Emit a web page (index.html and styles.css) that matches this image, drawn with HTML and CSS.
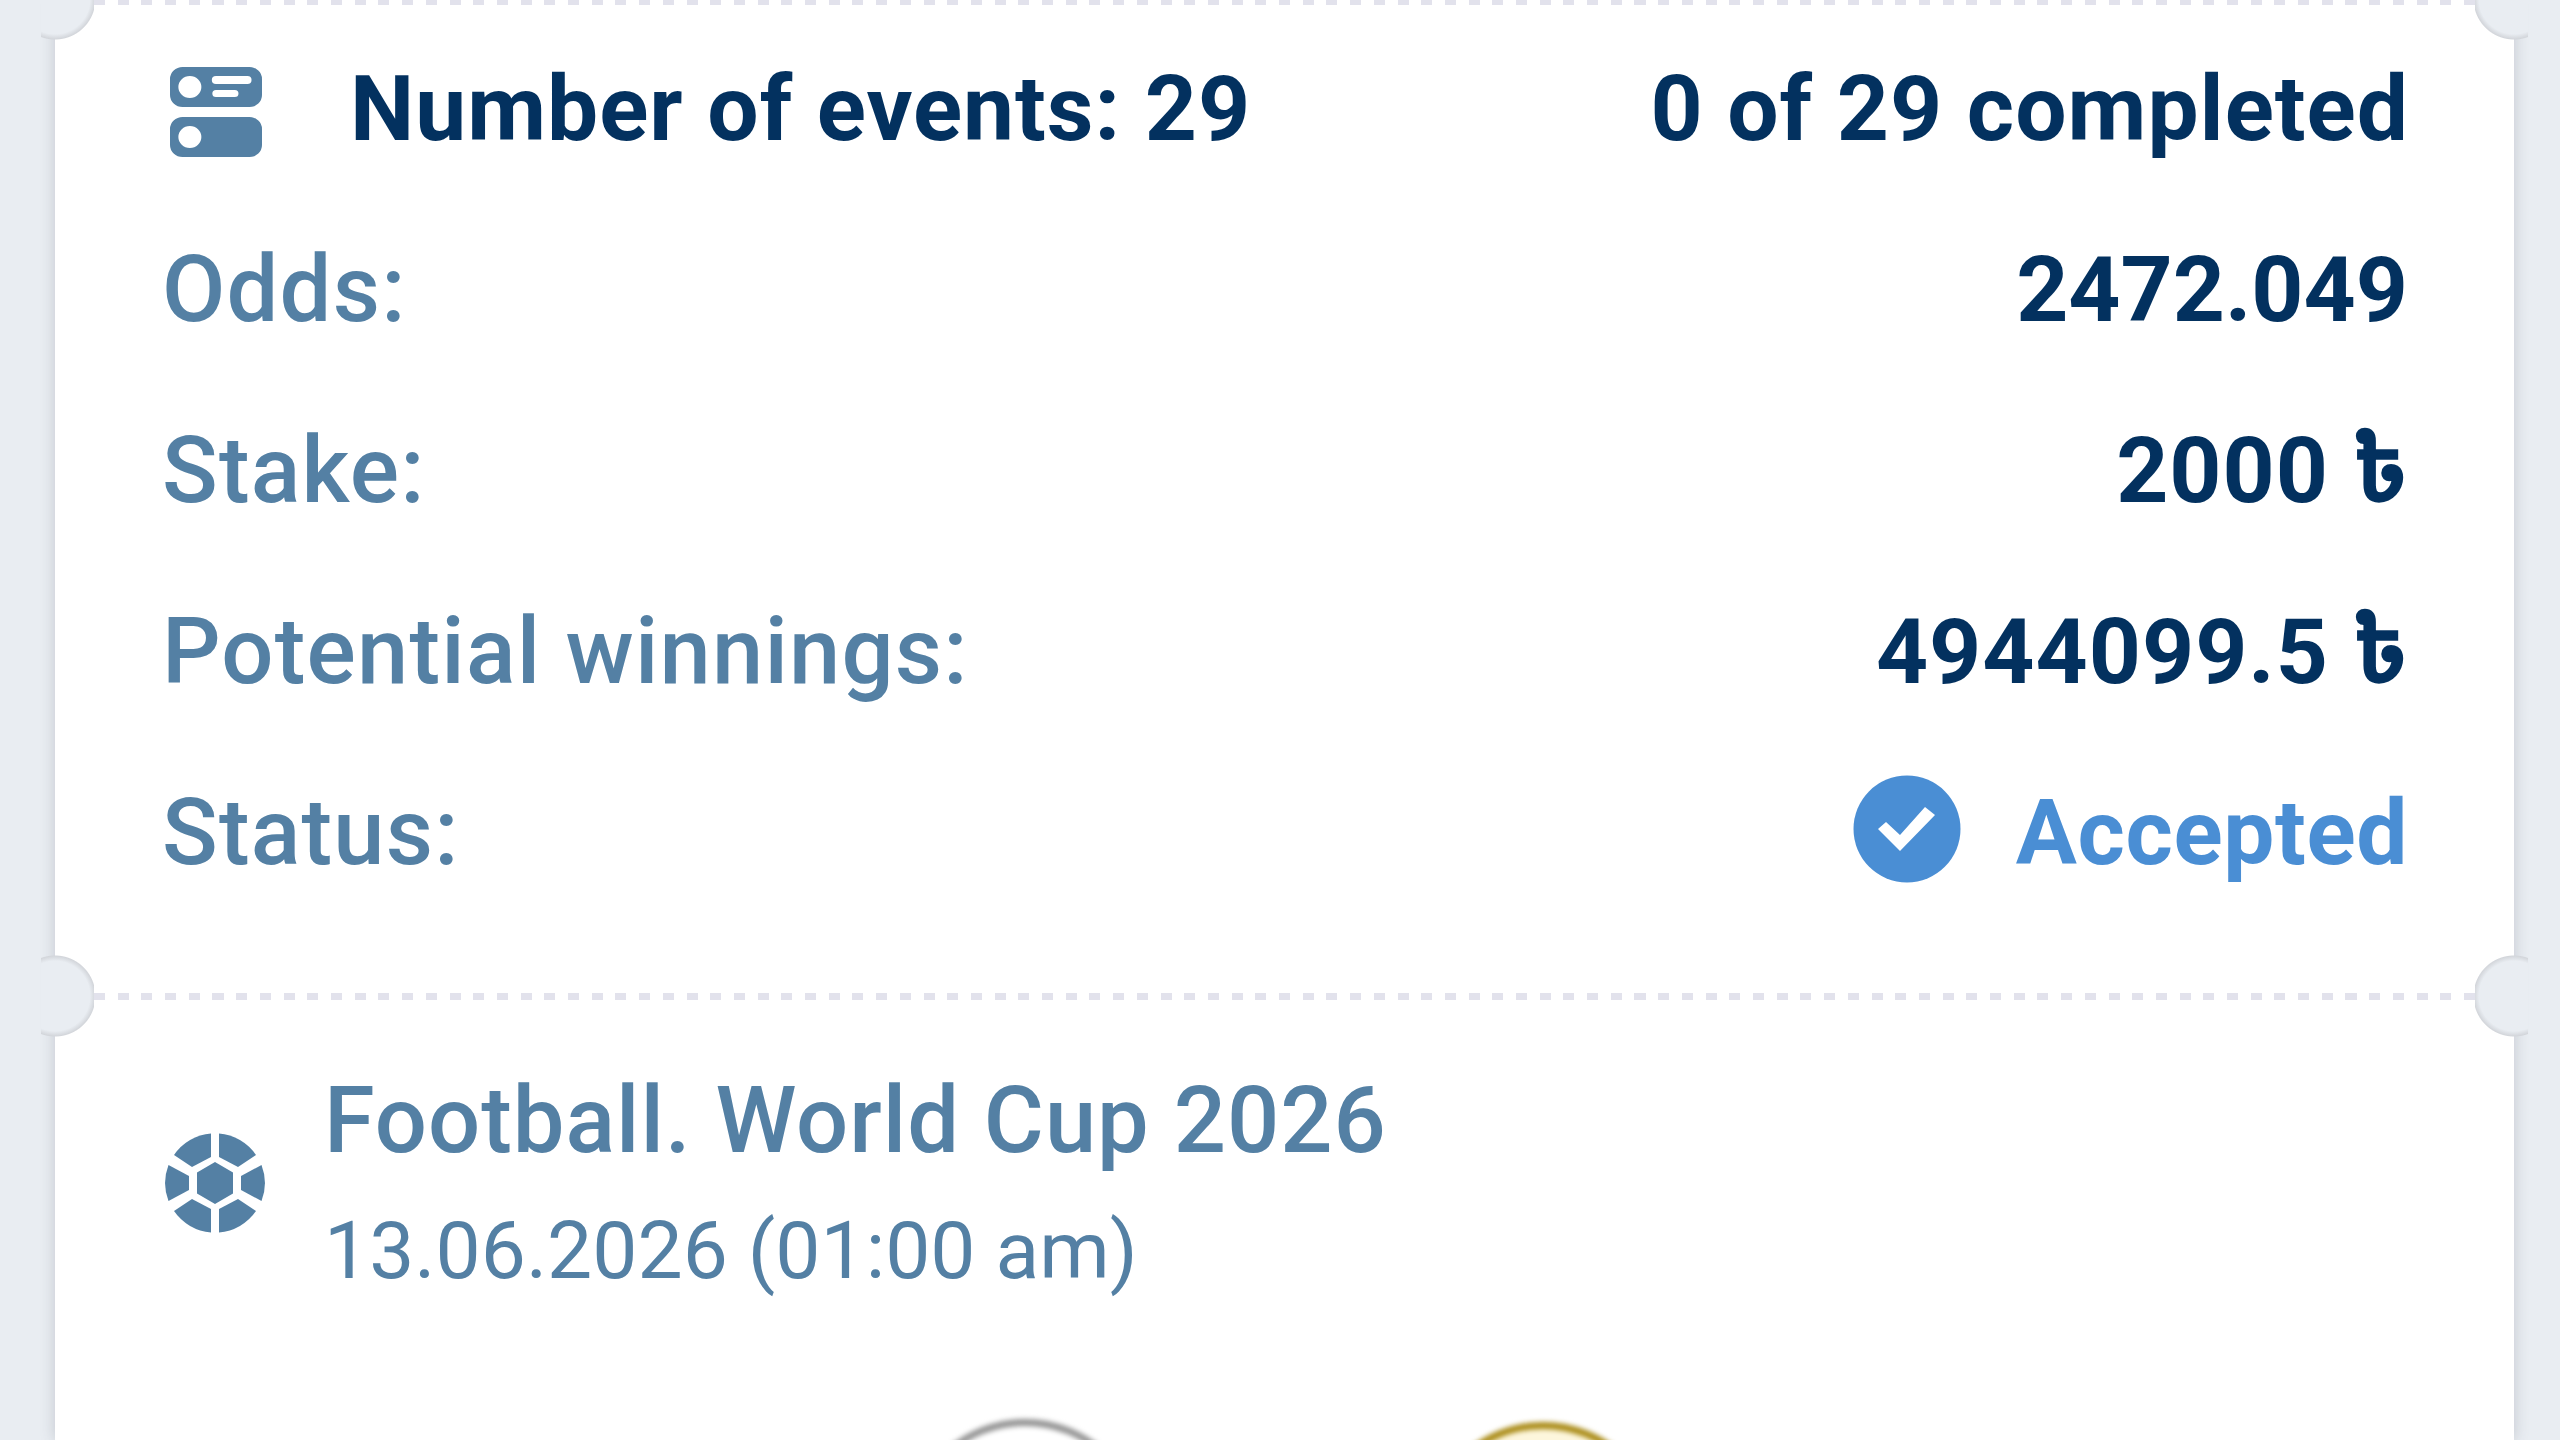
FILE: index.html
```
<!DOCTYPE html>
<html lang="en">
<head>
<meta charset="utf-8">
<title>Bet details</title>
<link rel="stylesheet" href="styles.css">
</head>
<body>
<main class="ticket">
  <div class="notch notch-left notch-tl"></div>
  <div class="notch notch-right notch-tr"></div>
  <div class="dots dots-top"></div>
  <section class="summary">
    <div class="row">
      <div class="events">
        <svg class="icon-events" viewBox="0 0 88 90" preserveAspectRatio="none" aria-hidden="true">
          <path fill="#5480a4" fill-rule="evenodd" d="M12 0H76A12 12 0 0 1 88 12V28A12 12 0 0 1 76 40H12A12 12 0 0 1 0 28V12A12 12 0 0 1 12 0ZM19 9A11 11 0 1 0 19 31A11 11 0 1 0 19 9ZM44 9A4 4 0 0 0 44 17H74A4 4 0 0 0 74 9ZM44 23A3.5 3.5 0 0 0 44 30H62A3.5 3.5 0 0 0 62 23Z"/>
          <path fill="#5480a4" fill-rule="evenodd" d="M12 50H76A12 12 0 0 1 88 62V78A12 12 0 0 1 76 90H12A12 12 0 0 1 0 78V62A12 12 0 0 1 12 50ZM19 59A11 11 0 1 0 19 81A11 11 0 1 0 19 59Z"/>
        </svg>
        <span class="strong">Number of events: 29</span>
      </div>
      <span class="strong">0 of 29 completed</span>
    </div>
    <div class="row"><span class="label">Odds:</span><span class="strong strong-tight">2472.049</span></div>
    <div class="row"><span class="label">Stake:</span><span class="strong">2000 ৳</span></div>
    <div class="row"><span class="label">Potential winnings:</span><span class="strong">4944099.5 ৳</span></div>
    <div class="row">
      <span class="label">Status:</span>
      <div class="status">
        <svg class="icon-check" viewBox="-54 -54 108 108" aria-hidden="true">
          <circle r="53.5" fill="#4a8ed4"/>
          <path fill="#fff" d="M-29 0L-7 22L28-14L18-22L-7 6L-21-7Z"/>
        </svg>
        <span class="accepted">Accepted</span>
      </div>
    </div>
  </section>
  <div class="notch notch-left notch-ml"></div>
  <div class="notch notch-right notch-mr"></div>
  <div class="dots dots-mid"></div>
  <section class="event">
    <svg class="icon-ball" viewBox="-50 -50 100 100" aria-hidden="true">
      <g fill="#5480a4">
        <path d="M0-21L18-10.5V10.5L0 21L-18 10.5V-10.5Z"/>
        <path d="M-4-49.5V-26L-23-16L-41-28A50 50 0 0 1-4-49.5Z"/>
        <path d="M4-49.5V-26L23-16L41-28A50 50 0 0 0 4-49.5Z"/>
        <path d="M-4 49.5V26L-23 16L-41 28A50 50 0 0 0-4 49.5Z"/>
        <path d="M4 49.5V26L23 16L41 28A50 50 0 0 1 4 49.5Z"/>
        <path d="M-46.5-18L-26-7V7L-46.5 18A50 50 0 0 1-46.5-18Z"/>
        <path d="M46.5-18L26-7V7L46.5 18A50 50 0 0 0 46.5-18Z"/>
      </g>
    </svg>
    <div class="event-text">
      <div class="event-title">Football. World Cup 2026</div>
      <div class="event-date">13.06.2026 (01:00 am)</div>
    </div>
  </section>
  <section class="teams">
    <div class="badge badge-a"></div>
    <div class="badge badge-b"></div>
  </section>
</main>
</body>
</html>
```
FILE: styles.css
```
html, body {
  margin: 0;
  height: 1440px;
  overflow: hidden;
  background: #e9edf2;
}
body {
  font-family: Roboto, "Noto Sans Bengali", "Noto Sans", "DejaVu Sans", sans-serif;
  color: #5480a4;
}
.ticket {
  position: relative;
  box-sizing: border-box;
  width: 2459px;
  height: 1440px;
  margin-left: 55px;
  background: #fff;
  box-shadow: 0 0 14px rgba(60, 66, 76, .22);
}
.notch {
  position: absolute;
  width: 53px;
  height: 82px;
}
.notch-left {
  left: -14px;
  background: radial-gradient(circle 41px at 14px 41px, #e9edf2 35px, #d3d6db 40px, rgba(211, 214, 219, 0) 41px);
}
.notch-right {
  right: -14px;
  background: radial-gradient(circle 41px at 39px 41px, #e9edf2 35px, #d3d6db 40px, rgba(211, 214, 219, 0) 41px);
}
.notch-tl, .notch-tr { top: -42px; }
.notch-ml, .notch-mr { top: 955px; }
.dots {
  position: absolute;
  left: 39px;
  right: 39px;
  height: 7px;
  background: repeating-linear-gradient(90deg, #e2e2ec 0 11px, transparent 11px 23.7px);
}
.dots-top { top: -2px; }
.dots-mid { top: 993px; }
.summary {
  box-sizing: border-box;
  height: 1000px;
  padding: 18px 106px 0 107px;
  filter: blur(.7px);
}
.row {
  display: flex;
  justify-content: space-between;
  align-items: center;
  height: 181px;
  line-height: 120px;
  white-space: nowrap;
}
.events {
  display: flex;
  align-items: center;
  gap: 88px;
}
.icon-events {
  width: 92px;
  height: 90px;
  margin-left: 8px;
  margin-top: 6px;
}
.strong {
  font-size: 91px;
  font-weight: 700;
  letter-spacing: 1px;
  margin-right: -1px;
  color: #03315f;
}
.strong-tight {
  letter-spacing: 0;
  margin-right: 0;
}
.label {
  font-size: 92px;
  font-weight: 500;
  letter-spacing: 1.2px;
  color: #5480a4;
}
.status {
  display: flex;
  align-items: center;
  gap: 55px;
}
.icon-check {
  width: 108px;
  height: 108px;
  margin-top: -8px;
}
.accepted {
  font-size: 91px;
  font-weight: 700;
  letter-spacing: .6px;
  color: #4a8ed4;
}
.event {
  display: flex;
  align-items: flex-start;
  gap: 59px;
  padding: 63px 0 0 110px;
  filter: blur(.7px);
}
.icon-ball {
  width: 100px;
  height: 100px;
  flex: none;
  margin-top: 70px;
}
.event-title {
  font-size: 92px;
  font-weight: 500;
  letter-spacing: 1px;
  line-height: 116px;
  white-space: nowrap;
}
.event-date {
  font-size: 80.4px;
  line-height: 124px;
  margin-top: 10px;
  white-space: nowrap;
}
.teams {
  display: flex;
  gap: 280px;
  height: 27px;
  overflow: hidden;
  margin-top: 100px;
  padding-left: 851px;
}
.badge {
  width: 238px;
  height: 238px;
  box-sizing: border-box;
  border-radius: 50%;
  filter: blur(2.5px);
}
.badge-a {
  margin-top: 6px;
  border: 7px solid #949494;
  background: #fff;
}
.badge-b {
  margin-top: 9px;
  border: 7px solid #a98a14;
  background: #fdf6dc;
}
```
